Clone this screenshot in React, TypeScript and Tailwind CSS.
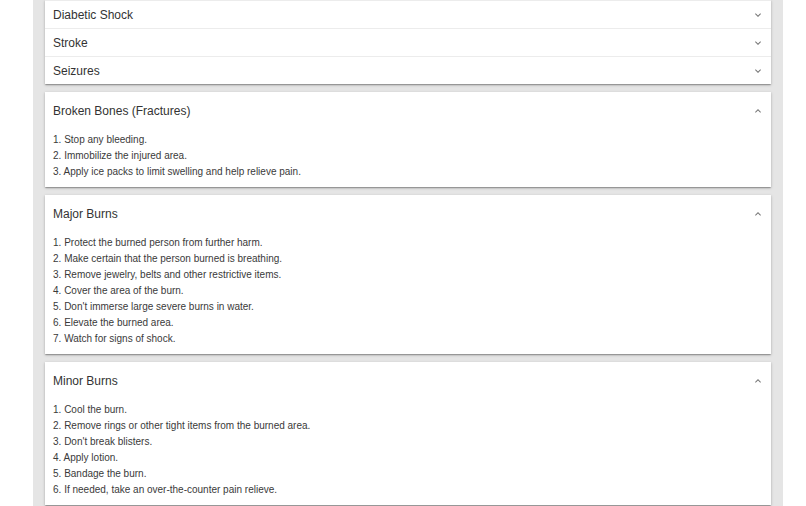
import React from 'react';

const shadow =
  'shadow-[0_1px_3px_rgba(0,0,0,0.2),0_1px_1px_rgba(0,0,0,0.14),0_2px_1px_-1px_rgba(0,0,0,0.12)]';

function Chevron({ up }: { up?: boolean }) {
  return (
    <svg width="12" height="12" viewBox="0 0 24 24" className={up ? 'rotate-180' : ''}>
      <path d="M16.59 8.59 12 13.17 7.41 8.59 6 10l6 6 6-6z" fill="#777" />
    </svg>
  );
}

const collapsed = ['Diabetic Shock', 'Stroke', 'Seizures'];

const expanded: { title: string; steps: string[] }[] = [
  {
    title: 'Broken Bones (Fractures)',
    steps: [
      'Stop any bleeding.',
      'Immobilize the injured area.',
      'Apply ice packs to limit swelling and help relieve pain.',
    ],
  },
  {
    title: 'Major Burns',
    steps: [
      'Protect the burned person from further harm.',
      'Make certain that the person burned is breathing.',
      'Remove jewelry, belts and other restrictive items.',
      'Cover the area of the burn.',
      "Don't immerse large severe burns in water.",
      'Elevate the burned area.',
      'Watch for signs of shock.',
    ],
  },
  {
    title: 'Minor Burns',
    steps: [
      'Cool the burn.',
      'Remove rings or other tight items from the burned area.',
      "Don't break blisters.",
      'Apply lotion.',
      'Bandage the burn.',
      'If needed, take an over-the-counter pain relieve.',
    ],
  },
];

export default function App() {
  return (
    <div
      className="h-[506px] w-full overflow-hidden bg-white"
      style={{ fontFamily: '"Liberation Sans", Arial, sans-serif' }}
    >
      <div className="ml-[33px] flex h-full w-[750px] flex-col gap-2 bg-[#e5e5e5] px-3">
        {/* collapsed group */}
        <div className={`bg-white ${shadow}`}>
          {collapsed.map((t) => (
            <div
              key={t}
              className="flex h-7 items-center justify-between border-t border-[#ececec] pl-2 pr-[7px] pt-px text-[12px] text-[#333]"
            >
              <span>{t}</span>
              <Chevron />
            </div>
          ))}
        </div>

        {expanded.map((s) => (
          <div key={s.title} className={`bg-white ${shadow}`}>
            <div className="flex h-9 items-center justify-between pl-2 pr-[7px] pt-px text-[12px] text-[#333]">
              <span>{s.title}</span>
              <Chevron up />
            </div>
            <ol className="px-2 pb-[7px] pt-1 text-[10px] leading-4 text-[#3a3a3a]">
              {s.steps.map((st, i) => (
                <li key={i}>
                  {i + 1}. {st}
                </li>
              ))}
            </ol>
          </div>
        ))}
      </div>
    </div>
  );
}
